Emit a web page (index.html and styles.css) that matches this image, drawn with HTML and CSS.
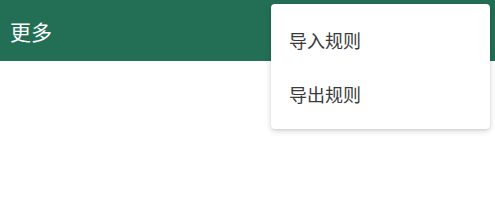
FILE: index.html
```html
<!DOCTYPE html>
<html lang="zh-CN">
<head>
  <meta charset="UTF-8">
  <title>更多</title>
  <link rel="stylesheet" href="styles.css">
</head>
<body>
  <div class="toolbar">
    <span class="title">更多</span>
  </div>

  <div class="menu">
    <div class="menu-item">导入规则</div>
    <div class="menu-item">导出规则</div>
  </div>
</body>
</html>
```

FILE: styles.css
```css
body {
  margin: 0;
  font-family: "Noto Sans CJK SC", "Noto Sans", sans-serif;
  background: #fff;
}
.toolbar {
  height: 61px;
  background-color: #236f55;
  display: flex;
  align-items: center;
  padding-left: 10px;
  box-shadow: 0 1px 3px rgba(0, 0, 0, 0.12);
}
.title {
  color: #fff;
  font-size: 21px;
}
.menu {
  position: absolute;
  top: 4px;
  left: 271px;
  width: 219px;
  padding: 9px 0 8px;
  background: #fff;
  border-radius: 4px;
  box-shadow: 0 2px 6px rgba(0, 0, 0, 0.16), 0 1px 2px rgba(0, 0, 0, 0.08);
}
.menu-item {
  height: 54px;
  line-height: 54px;
  padding-left: 18px;
  font-size: 18px;
  color: #3a3a3a;
}
```
